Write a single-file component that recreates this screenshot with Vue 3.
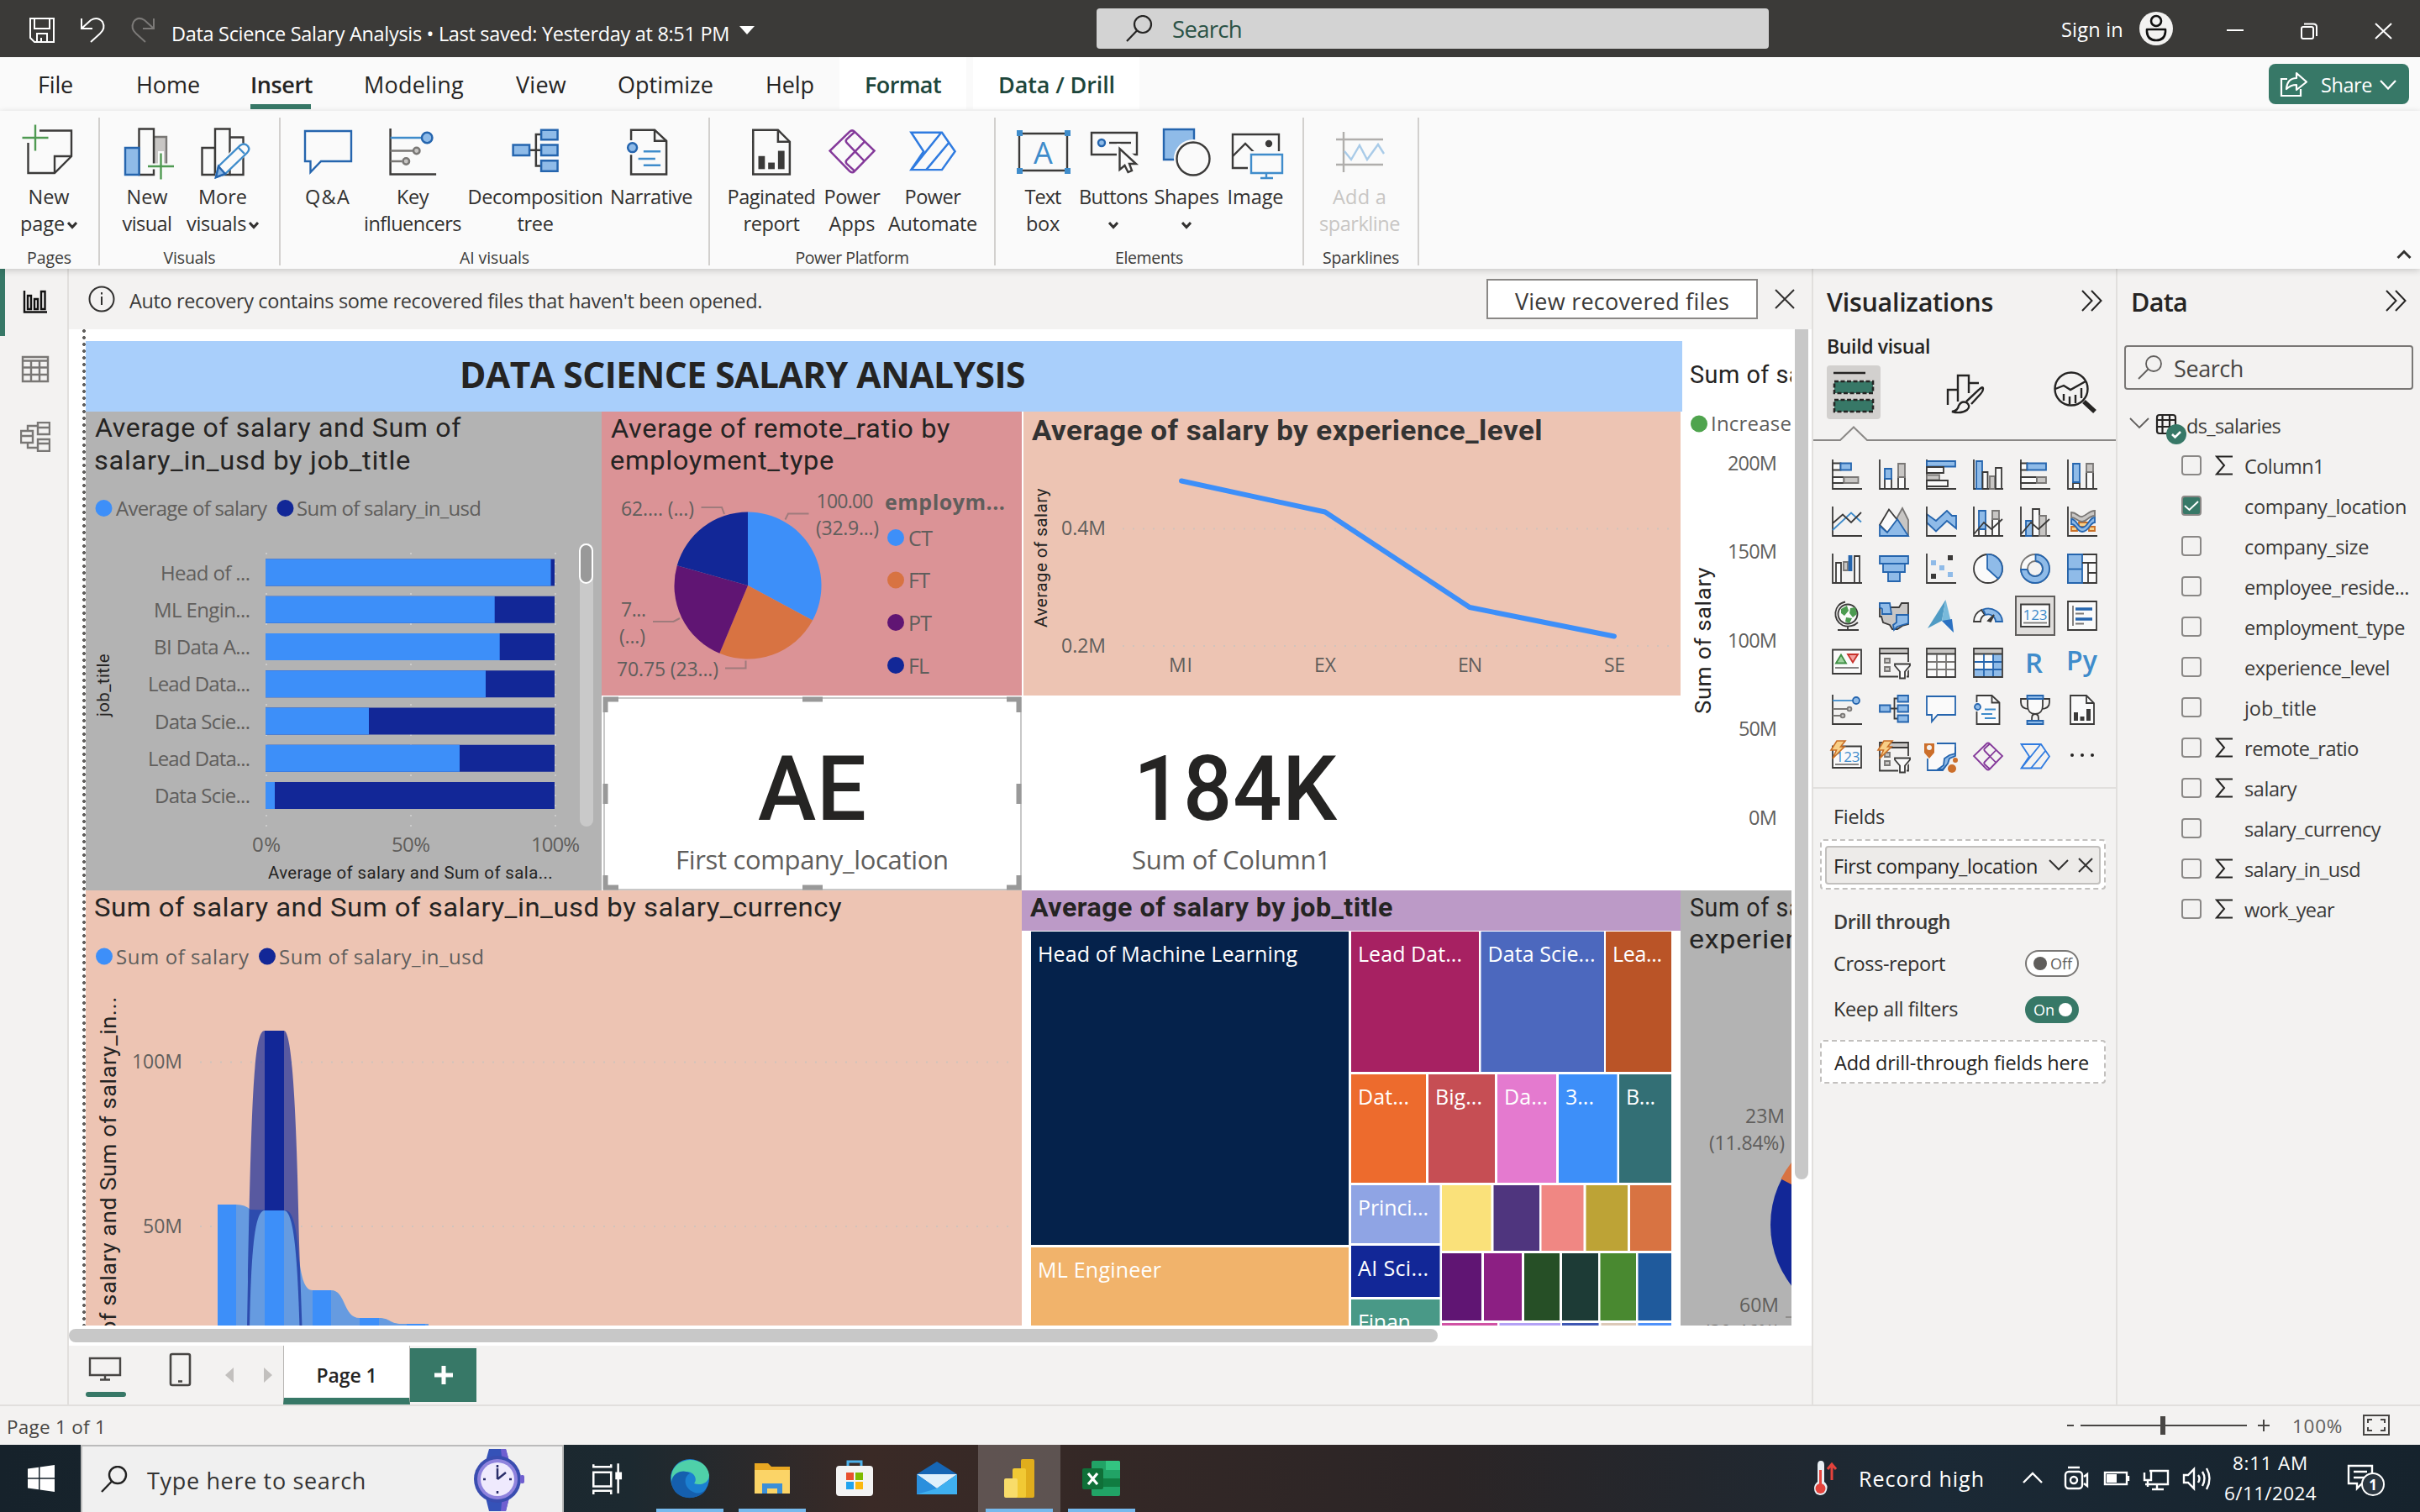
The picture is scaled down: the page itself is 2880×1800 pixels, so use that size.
<script setup>
// Stretches or tightens letter spacing so a label takes exactly the given width
const vFit = {
  mounted(el, { value }) {
    if (!value) return
    const range = document.createRange()
    range.selectNodeContents(el)
    const w = range.getBoundingClientRect().width
    el.style.letterSpacing = ((value + 2 - w) / el.textContent.length).toFixed(3) + 'px'
  }
}
const vDin = {
  mounted(el, { value }) {
    el.setAttribute('textLength', value)
    el.setAttribute('lengthAdjust', 'spacingAndGlyphs')
  }
}

const D = '#3b3a39', B = '#2565ae', L = '#8fbbe8', G = '#797775', S = '#c8c6c4', W = '#fafafa', C = '#3f8ccb'
const p = (d, s = D, f = 'none') => `<path d="${d}" stroke="${s}" fill="${f}"/>`
const b = (x1, y1, x2, y2, s = D, f = W) => p(`M${x1} ${y1}H${x2}V${y2}H${x1}Z`, s, f)
const sq = (x, y, w, h, f) => `<rect x="${x}" y="${y}" width="${w}" height="${h}" fill="${f}" stroke="none"/>`
const c = (x, y, r, s = B, f = L) => `<circle cx="${x}" cy="${y}" r="${r}" stroke="${s}" fill="${f}"/>`
const t = (x, y, size, s, f, w = 400) => `<text x="${x}" y="${y}" font-size="${size}" fill="${f}" stroke="none" font-weight="${w}" text-anchor="middle" font-family="Open Sans, sans-serif">${s}</text>`
const axis = p('M1 0V35H36')

const keyInf = axis + p('M1 7H25', C) + c(29, 7, 4) + p('M1 17H18M1 25H10', G) + c(21, 17, 2.4, G, S) + c(13, 25, 2.4, G, S)
const decomp = p('M13.5 16.5H22.5M22.5 4.5H18.5V28.5H22.5') + b(1, 12.5, 13.5, 20.5, B, L) + b(22.5, 1, 35, 8.5, B, L) + b(22.5, 12.5, 35, 20.5, B, L) + b(22.5, 24.5, 35, 32.5, B, L)
const qna = p('M1 2H35V24H14L7 32V24H1Z', B, W)
const narrative = p('M4.5 9V1H22.5L31.5 9.5V35H4.5V20', D, W) + p('M22.5 1V9.5H31.5') + p('M14 17.5H27M10 23H23M14 28H27', C) + c(5.5, 14.5, 3.5)
const paginated = p('M4 1H23L32 10V35H4Z', D, W) + p('M23 1V10H32') + sq(8, 21, 5, 10, D) + sq(15.5, 26, 5, 5, D) + sq(23, 17, 5, 14, D)
const apps = p('M20 2.5Q18 .5 16 2.5L14.5 4M20 2.5L35 17L20 32.5Q18 34.5 16 32.5L1 17L16 2.5M20 2.5L14 8Q12.500 9.500 14 11L27.500 25M20 32.500L14 27Q12.500 25.500 14 24L27.500 10', '#84399a')
const automate = p('M1.5 3H25L35 17.500L25 31.500H1.500L11 17.500Z', '#2f7be0') + p('M24.500 3L2 31M30.500 10.500L13 31.500', '#2f7be0')
const bolt = `<path d="M6 -1H16L10.500 6H15L1 20L5.500 10H-1Z" stroke="#c96f26" fill="#f8cf87" stroke-width="1.600"/>`
const slicer = () => b(1, 1, 35, 34.5, D, '#f3f2f1') + sq(2, 2, 32, 4.500, S) + p('M1 7H35') + b(7, 13, 13, 18, G, S) + b(7, 23, 13, 28, G, S) + `<path d="M17 17H39V23L33 29V38H23V29L17 23Z" fill="#f3f2f1" stroke="none"/>` + p('M19 19.500H37V21.500L31 28.500V36.500H25V28.500L19 21.500Z', D, W)
const tableIcon = (m) => b(1, 1, 35, 35, D, W) + sq(2, 2, 32, 5, S) + (m ? sq(24, 8, 10, 26, L) + sq(2, 26, 32, 8, L) : '') + p('M1 7.500H35', D) + p('M2 17H34M2 26H34M13 8V34M24 8V34', m ? B : G)

const vizIcons = [
  axis + b(1, 4.5, 10.5, 12.5) + b(10.5, 4.5, 23, 12.5, B, L) + b(1, 21, 14.5, 28) + b(14.5, 21, 31.5, 28, G, S),
  axis + b(7, 23, 15, 35) + b(7, 11, 15, 23, B, L) + b(23, 21, 31, 35) + b(23, 5, 31, 21, G, S),
  axis + b(1, 2, 35, 8.5, B, L) + b(1, 9, 21, 16) + b(1, 18.500, 16, 24.500, G, S) + b(1, 25, 26, 32),
  axis + b(4, 2, 11, 35, B, L) + b(11.5, 15, 17.5, 35) + b(20, 20, 26, 35, G, S) + b(27, 10, 34, 35),
  axis + b(1, 4.5, 8.5, 12.5) + b(8.5, 4.5, 31, 12.5, B, L) + b(1, 21, 20, 28) + b(20, 21, 31, 28, G, S),
  axis + b(7, 28, 15, 35) + b(7, 5, 15, 27, B, L) + b(23, 15, 31, 35) + b(23, 5, 31, 15, G, S),
  axis + p('M1 28L23 7.5L35 18.5', C) + p('M1 20L13 9.5L23 19L35 7'),
  p('M19 18L28 2L35 16V35', G, S) + p('M1 22L12 3.500L22 16L10 31Z', D, W) + p('M1 23L10 31L22 15L35 35H1Z', B, L),
  p('M1 9L12 17L25 5L31 11H36V26L25 17L12 29.500L1 19Z', B, L) + axis,
  axis + b(7, 27, 15, 35) + b(7, 5, 15, 27, B, L) + b(23, 15, 31, 35) + b(23, 5, 31, 15, G, S) + p('M1 33L13 19L22 27L35 15'),
  axis + b(7, 17, 15, 35, B, L) + b(15, 3, 23, 35) + b(23, 11, 31, 35, G, S) + p('M1 33L13 19L22 27L35 15'),
  axis + p('M5 24H12V29H5ZM26 24H33V29H26ZM14 19H24V24H14Z', '#c96f26', '#f8cf87') + p('M5 7C12 7 13 13 18 12C24 10 26 5 33 5V11C26 11 23 18 18 18C12 18 11 13 5 13Z', G, S) + p('M5 15C12 15 12 25 18 25C25 25 26 13 33 13V19C27 19 26 30 18 30C11 30 12 21 5 21Z', B, L),
  axis + b(5, 11, 11, 35) + b(14, 10, 19, 20, G, S) + b(20.500, 3, 23.500, 20, B, B) + b(27, 3, 33, 35),
  b(1, 3, 35, 12, B, L) + b(5, 12, 31, 22, B, L) + b(11, 22, 25, 33, B, L),
  axis + sq(26, 2, 6, 6, D) + sq(6, 24, 6, 6, D) + sq(6, 8, 6, 6, L) + sq(16, 14, 6, 6, L) + sq(26, 22, 6, 6, L),
  c(18, 18, 17, D, W) + p('M17 1A17 17 0 0 1 30 30L17 18Z', B, L),
  c(18, 18, 17, G, W) + p('M18.500 1A17 17 0 1 1 1 19H9A9 9 0 1 0 18.500 9Z', B, L) + c(18, 18, 9, G, '#f3f2f1') + p('M18.500 9A9 9 0 1 1 9 19', B),
  b(1, 1, 35, 35) + b(1, 1, 18, 35, B, L) + p('M1 18.500H18', B) + p('M18 11H35M25 11V35M25 23H35'),
  c(19, 16, 11.5, D, W) + `<path d="M11 10L18 6L20 12L15 18L11 15ZM22 9L28 8L30 16L25 20L21 15ZM17 20L24 21L21 27L16 25Z" fill="#4c9b50" stroke="none"/>` + p('M16 1.500C2 4 0 23 13 29.500C20 32 27 30 31 26M7 35H32M19 31V35'),
  p('M1 3H10L14 8H24L27 3H35V28L28 30L22 34H16L13 29L5 26L3 19H1Z', D, S) + p('M1 3H13L15 16H4V10L1 8Z', B, L) + p('M21 17H35V27L28 29L22 31L18 35L17 29L21 26Z', B, L),
  `<path d="M23.500 -1L2 33L19 24Z" fill="#4f9bc4" stroke="none"/><path d="M23.500 -1L33 38L19 24Z" fill="#78badb" stroke="none"/><path d="M19 24L33 38L31 22Z" fill="#2b71c2" stroke="none"/>`,
  p('M1 25A17 16 0 0 1 10 11L14 17A9 9 0 0 0 9 25Z', D, W) + p('M12 10.500A17 16 0 0 1 35 25H27A9 9 0 0 0 15 17Z', B, L) + p('M18 24L25 17L21 25Z', D, D),
  b(1, 4.5, 35, 31) + t(18, 22.5, 17, '123', C) + p('M4 26.500H32', G),
  b(1, 1, 35, 35) + p('M7 6V30', G) + `<path d="M10 10H30M10 22H30" stroke="${B}" stroke-width="3.600"/>` + p('M10 15.500H20M10 27.500H20', G),
  b(1, 2.500, 35, 31) + p('M5 18.500L11 8.500L17 18.500Z', '#3f8f44', '#9fd29f') + p('M19 8H31L25 17.500Z', '#c8322c', '#f2a3a0') + p('M4 24H32', G),
  slicer(),
  tableIcon(false),
  tableIcon(true),
  t(16.5, 30, 33, 'R', C, 600),
  t(17.5, 26.5, 32, 'Py', C, 600),
  keyInf, decomp, qna, narrative,
  p('M9 5H1V9C1 15 5 17 11 17M27 5H35V9C35 15 31 17 25 17M14 31C14 26 14 23 18 23C22 23 22 26 22 31', D, 'none') + p('M9 2H27V13C27 19 24 23 18 23C12 23 9 19 9 13Z', D, W) + b(8.5, 1, 27.5, 5, B, L) + b(8.5, 31, 27.5, 35, B, L),
  paginated,
  b(1, 5.500, 35, 31) + t(19, 23.500, 17, '123', C) + p('M4 27H32', G) + bolt,
  slicer() + bolt,
  p('M13 2H35V14L27 18L24 28L20 34H2V20', B, W) + `<path d="M35 6V14L28 16L22 20L21 28L14 33H20L26 26L28 20L35 17Z" fill="${L}" stroke="${B}"/>` + `<path d="M-2 2H10V13L4 20L-2 13Z" fill="#cc6f2b" stroke="none"/><circle cx="4" cy="7" r="3" fill="#f3f2f1" stroke="none"/><circle cx="31" cy="32" r="5" fill="#cc6f2b" stroke="none"/><circle cx="35" cy="22" r="3" fill="#cc6f2b" stroke="none"/>`,
  apps, automate,
  `<g fill="#252423" stroke="none"><circle cx="6" cy="16" r="2"/><circle cx="18" cy="16" r="2"/><circle cx="30" cy="16" r="2"/></g>`
]

const small = '-2.6 -3.9 41.1 41.1'
const plusGreen = (x, y) => `<path d="M${x} ${y - 15.500}V${y + 15.500}M${x - 15.500} ${y}H${x + 15.500}" stroke="#4f9a52" stroke-width="2.400"/>`
const groups = [
  { name: 'Pages', nw: 51, cls: 'g1', items: [
    { w: 116, l: [['New', 47], ['page', 51]], car: 1, i: p('M21 8.5H59V39L39 59H7.5V23', D, W) + p('M39 59V39H59') + plusGreen(16, 17) }] },
  { name: 'Visuals', nw: 60, cls: 'g2', items: [
    { w: 90, l: [['New', 47], ['visual', 57]], i: b(40, 16, 55, 50, G, S) + b(22.5, 6.5, 40, 61) + b(6, 29, 22.5, 61, B, L) + `<path d="M48.500 33V66M32 51H65" stroke="#fafafa" stroke-width="7"/>` + plusGreen(48.5, 51) },
    { w: 90, l: [['More', 56], ['visuals', 69]], car: 1, i: b(7.5, 29, 23, 61) + b(23, 6.5, 40.500, 61) + p('M40.500 16.500H56.500V61H40.500') + `<path d="M22 66L26 50L52 22L64 27L62 36L36 60Z" fill="#fafafa" stroke="none"/>` + p('M24 64L27 51L53 26Q58 22.500 62 27Q65 31 61 35L35 60Z', C, W) + p('M24 64L27 51L35 60Z', B, L) + p('M51 29L58 36', C) }] },
  { name: 'AI visuals', nw: 81, cls: 'g3', items: [
    { w: 80, l: [['Q&A', 52]], i: p('M5 9H60V45H24L11.5 58V45H5Z', B, W) },
    { w: 122, l: [['Key', 36], ['influencers', 114]], s: 1, i: keyInf },
    { w: 170, l: [['Decomposition', 159], ['tree', 41]], s: 1, i: decomp },
    { w: 106, l: [['Narrative', 96]], s: 1, dx: -3, i: narrative }] },
  { name: 'Power Platform', nw: 133, cls: 'g4', items: [
    { w: 112, l: [['Paginated', 103], ['report', 65]], s: 1, i: paginated },
    { w: 80, l: [['Power', 65], ['Apps', 53]], s: 1, i: apps },
    { w: 112, l: [['Power', 65], ['Automate', 104]], s: 1, i: automate }] },
  { name: 'Elements', nw: 79, cls: 'g5', items: [
    { w: 82, l: [['Text', 41], ['box', 38]], i: b(4, 12, 61, 56) + t(32.5, 48, 36, 'A', C) + sq(1, 8, 7, 7, C) + sq(58, 8, 7, 7, C) + sq(1, 53, 7, 7, C) + sq(58, 53, 7, 7, C) },
    { w: 86, l: [['Buttons', 80]], caret: 1, i: b(6, 11, 60, 37) + c(18, 23, 4) + p('M27 23H53') + `<path d="M36 24V62L60 54L62 42L40 24Z" fill="#fafafa" stroke="none"/>` + p('M39.500 30V55L45.500 50L49.500 58L54 56L51 48H59Z', D, W) },
    { w: 88, l: [['Shapes', 75]], caret: 1, i: b(5, 7, 41, 43, B, L) + `<circle cx="40" cy="42" r="23" fill="#fafafa" stroke="none"/>` + c(40, 42, 19.5, D, W) },
    { w: 76, l: [['Image', 65]], i: b(5, 13, 60, 53) + p('M5 39L20 24L31 35') + c(48, 24, 3, D, D) + `<rect x="23" y="33" width="45" height="36" fill="#fafafa" stroke="none"/>` + b(27, 37, 64, 59, C) + p('M45 59V64M38 65H53', C) }] },
  { name: 'Sparklines', nw: 89, cls: 'g6', items: [
    { w: 132, dis: 1, l: [['Add a', 62], ['sparkline', 94]], i: p('M4 19H60M4 49H60M13 10V58', '#b0aeac') + p('M14 33L22 43L32 26L41 43L54 25L61 36', '#a9cbe8') }] }
]

const tabs = [['File', 40], ['Home', 74], ['Insert', 72], ['Modeling', 117], ['View', 58], ['Optimize', 112], ['Help', 56]]

// horizontal 100% bars: label, label width, split x
const bars = [['Head of ...', 107, 655.5], ['ML Engin...', 115, 588.7], ['BI Data A...', 115, 594.7], ['Lead Data...', 122, 578], ['Data Scie...', 114, 439], ['Lead Data...', 122, 547], ['Data Scie...', 114, 327]]

const wedge = (cx, cy, r, a0, a1) => {
  const pt = (a) => `${(cx + r * Math.sin(a * Math.PI / 180)).toFixed(2)} ${(cy - r * Math.cos(a * Math.PI / 180)).toFixed(2)}`
  return `M${cx} ${cy}L${pt(a0)}A${r} ${r} 0 ${a1 - a0 > 180 ? 1 : 0} 1 ${pt(a1)}Z`
}
const pie = [[0, 118.3, '#3d8ff9'], [118.3, 202.6, '#d87342'], [202.6, 285.7, '#601573'], [285.7, 360, '#122797']]
const pieLabels = [['62.... (...)', 739, 614, 87], ['100.00', 971.5, 605, 68], ['(32.9...)', 971, 636.5, 75], ['7...', 739, 734, 30], ['(...)', 737, 766, 31], ['70.75 (23...)', 734, 805, 121]]
const pieLegend = [['CT', 29, '#3d8ff9', 640], ['FT', 26, '#d87342', 690.5], ['PT', 28, '#601573', 741], ['FL', 25, '#122797', 792]]
const wfTicks = [['200M', 59, 560], ['150M', 59, 665], ['100M', 59, 771], ['50M', 46, 876], ['0M', 34, 982]]

// treemap tiles: x1, y1, x2, y2, colour, label, label width
const tiles = [
  [1227, 1109, 1605, 1482, '#05224b', 'Head of Machine Learning', 309],
  [1227, 1485, 1605, 1580, '#f1b36b', 'ML Engineer', 147],
  [1608, 1109, 1760, 1276, '#a72162', 'Lead Dat...', 124],
  [1762.5, 1109, 1909, 1276, '#4c68be', 'Data Scie...', 128],
  [1911, 1109, 1989, 1276, '#ba5427', 'Lea...', 59],
  [1608, 1279, 1697, 1408, '#ed6b2d', 'Dat...', 61],
  [1700, 1279, 1779, 1408, '#c64e54', 'Big...', 56],
  [1782, 1279, 1852, 1408, '#e47acf', 'Da...', 52],
  [1855, 1279, 1924.5, 1408, '#3d8ff9', '3...', 34],
  [1927, 1279, 1989, 1408, '#336f75', 'B...', 35],
  [1608, 1411, 1713.5, 1480, '#8fa4e4', 'Princi...', 84],
  [1608, 1483, 1713.5, 1544, '#122797', 'AI Sci...', 84],
  [1608, 1547, 1713.5, 1580, '#499987', 'Finan...', 82],
  [1716, 1411, 1774.5, 1489, '#fae17a'], [1777.5, 1411, 1832, 1489, '#4f357e'], [1834.5, 1411, 1884.5, 1489, '#f08783'], [1887.5, 1411, 1937, 1489, '#bda336'], [1940, 1411, 1989, 1489, '#d87342'],
  [1716, 1492, 1763, 1572, '#601573'], [1766, 1492, 1811, 1572, '#8c1f83'], [1814, 1492, 1856, 1572, '#264f26'], [1859, 1492, 1902, 1572, '#1d3b36'], [1904.5, 1492, 1947, 1572, '#498930'], [1949.500, 1492, 1989, 1572, '#1f5a9c'],
  [1716, 1575, 1782, 1580, '#d052a4'], [1784.500, 1575, 1857, 1580, '#b3a1f5'], [1859, 1575, 1902.500, 1580, '#3f57b3'], [1905.500, 1575, 1947, 1580, '#dcc9b8'], [1949.500, 1575, 1989, 1580, '#4f92fa']
]

const fields = [['Column1', 93, 1], ['company_location', 191, 0, 1], ['company_size', 146], ['employee_reside...', 194], ['employment_type', 189], ['experience_level', 171], ['job_title', 84], ['remote_ratio', 134, 1], ['salary', 60, 1], ['salary_currency', 160], ['salary_in_usd', 136, 1], ['work_year', 105, 1]]
</script>

<template>
  <div class="app">
    <header class="titlebar">
      <svg class="qa" viewBox="0 0 200 68" fill="none" stroke="#fff" stroke-width="2">
        <path d="M36 22H64V50H41L36 45ZM41 22V34H59V22M44 50V40H56V50M49 45V50" />
        <path d="M97 22V34H110M97 34L108 24Q116 19 122 26Q126 34 119 40L108 50" />
        <path d="M183 22V34H170M183 34L172 24Q164 19 159 26Q155 34 162 40L173 50" stroke="#7c7a78" />
      </svg>
      <div class="doc"><span v-fit="662">Data Science Salary Analysis • Last saved: Yesterday at 8:51 PM</span></div>
      <svg class="tri" viewBox="0 0 18 10"><path d="M0 0H18L9 10Z" fill="#fff" /></svg>
      <div class="topsearch">
        <svg viewBox="0 0 32 32" fill="none" stroke="#252423" stroke-width="2.200"><circle cx="20" cy="11" r="10" /><path d="M13 18.500L1 31" /></svg>
        <span v-fit="81">Search</span>
      </div>
      <div class="signin"><span v-fit="72">Sign in</span></div>
      <svg class="avatar" viewBox="0 0 40 40"><circle cx="20" cy="20" r="20" fill="#f3f2f1" /><g fill="none" stroke="#111" stroke-width="2.600"><circle cx="20" cy="11" r="6" /><path d="M9 21H31V24Q30 34 20 34Q10 34 9 24Z" stroke-linejoin="round" /></g></svg>
      <svg class="winctl" viewBox="0 0 200 20" fill="none" stroke="#fff" stroke-width="2"><path d="M0 9H20M177 1L196 19M196 1L177 19" /><rect x="89" y="5" width="14" height="14" rx="2" /><path d="M92 1.500H103Q107 1.500 107 5V16" /></svg>
    </header>

    <nav class="tabs">
      <div v-for="(tb, i) in tabs" :key="tb[0]" class="tab" :class="['t' + i, { on: i === 2 }]"><span v-fit="tb[1]">{{ tb[0] }}</span></div>
      <div class="tab ctx c1"><span v-fit="89">Format</span></div>
      <div class="tab ctx c2"><span v-fit="137">Data / Drill</span></div>
      <div class="share">
        <svg viewBox="0 0 34 34" fill="none" stroke="#fff" stroke-width="2.200"><path d="M9 10H2V30H25V22" /><path d="M8 22Q9 9 20 9V3L32 13.500L20 23V17Q13 17 8 22Z" stroke-linejoin="round" /></svg>
        <span v-fit="59">Share</span>
        <svg class="chev" viewBox="0 0 20 12" fill="none" stroke="#fff" stroke-width="2.200"><path d="M1 1L10 10.500L19 1" /></svg>
      </div>
    </nav>

    <section class="ribbon">
      <div v-for="g in groups" :key="g.name" class="group" :class="g.cls">
        <div class="btns">
          <div v-for="(it, k) in g.items" :key="k" class="rb" :class="{ dis: it.dis }" :style="{ width: it.w + 'px' }">
            <svg class="ri" :class="{ nudge: it.dx }" :viewBox="it.s ? small : '0 0 64 64'" :stroke-width="it.s ? 1.6 : 2.4" v-html="it.i" />
            <div v-for="(ln, j) in it.l" :key="j" class="ln">
              <span v-fit="ln[1]">{{ ln[0] }}</span>
              <svg v-if="it.car && j === 1" class="car" viewBox="0 0 12 12" fill="none" stroke="#323130" stroke-width="3"><path d="M1 3L6 8.500L11 3" /></svg>
            </div>
            <div v-if="it.caret" class="ln"><svg class="car solo" viewBox="0 0 12 12" fill="none" stroke="#323130" stroke-width="3"><path d="M1 3L6 8.500L11 3" /></svg></div>
          </div>
        </div>
        <div class="gname"><span v-fit="g.nw">{{ g.name }}</span></div>
      </div>
      <svg class="collapse" viewBox="0 0 18 12" fill="none" stroke="#323130" stroke-width="3"><path d="M1.500 10L9 2.500L16.500 10" /></svg>
    </section>

    <div class="work">
      <aside class="rail">
        <div class="rcell on"><svg viewBox="0 0 36 36" fill="none" stroke="#111" stroke-width="2.400"><path d="M5 4V29.500H32M9 26V10H13V26ZM17 26V14H21V26ZM25 26V5H29.500V26Z" /></svg></div>
        <div class="rcell"><svg viewBox="0 0 36 36" fill="none" stroke="#797775" stroke-width="2.400"><path d="M3 3H33V32H3ZM3 7.500H33M3 15.500H33M3 24H33M13 8V32M23 8V32" /></svg></div>
        <div class="rcell"><svg viewBox="0 0 36 36" fill="none" stroke="#797775" stroke-width="2.400"><path d="M1 11H15V25H1ZM1 17H15M21 1H35V15H21ZM21 7H35M21 21H35V35H21ZM21 26H35M9 11V5H21M9 25V31H21" /></svg></div>
      </aside>

      <main class="main">
        <div class="msg">
          <svg class="info" viewBox="0 0 32 32" fill="none" stroke="#323130" stroke-width="2"><circle cx="16" cy="16" r="14.500" /><path d="M16 13V23M16 8V10.500" /></svg>
          <span class="mtext" v-fit="751">Auto recovery contains some recovered files that haven't been opened.</span>
          <div class="vbtn"><span v-fit="253">View recovered files</span></div>
          <svg class="mx" viewBox="0 0 24 24" fill="none" stroke="#323130" stroke-width="2"><path d="M1 1L23 23M23 1L1 23" /></svg>
        </div>

        <div class="canvas">
          <div class="dots"></div>
          <div class="report">
            <div class="banner"><span v-fit="671">DATA SCIENCE SALARY ANALYSIS</span></div>

            <svg class="v-wf" viewBox="2000 406 132 654">
              <g class="din"><text v-din="134" x="2011" y="456" font-size="30">Sum of sa</text></g>
              <circle cx="2022" cy="504.500" r="10" fill="#4fa44e" />
              <g class="seg"><text x="2036" y="513" font-size="24" textLength="96">Increase</text>
                <text v-for="k in wfTicks" :key="k[0]" :x="2115 - k[1]" :y="k[2]" font-size="23.500" :textLength="k[1]">{{ k[0] }}</text></g>
              <g class="din"><text v-din="175" transform="translate(2036 850) rotate(-90)" font-size="26">Sum of salary</text></g>
            </svg>

            <svg class="v-bars" viewBox="102 490 614 570">
              <rect x="102" y="490" width="614" height="570" fill="#b3b3b3" />
              <g class="din" font-size="30.500"><text v-din="436" x="113" y="520">Average of salary and Sum of</text><text v-din="377" x="112" y="558.500">salary_in_usd by job_title</text></g>
              <circle cx="123.500" cy="605" r="10" fill="#3d8ff9" /><circle cx="339.500" cy="605" r="10" fill="#122797" />
              <g class="seg" font-size="24"><text x="138" y="614" textLength="180">Average of salary</text><text x="353" y="614" textLength="220">Sum of salary_in_usd</text></g>
              <path d="M317 658V984M489 658V984M661 658V984" stroke="#cbcbcb" stroke-width="2" stroke-dasharray="2 10" />
              <g v-for="(r, i) in bars" :key="i">
                <rect x="316" :y="665.5 + i * 44.25" width="344" height="32" fill="#122797" />
                <rect x="316" :y="665.5 + i * 44.25" :width="r[2] - 316" height="32" fill="#3d8ff9" />
                <text class="segt" :x="298 - r[1]" :y="690.5 + i * 44.25" font-size="24" :textLength="r[1]">{{ r[0] }}</text>
              </g>
              <g class="seg" font-size="24"><text x="300" y="1013.500" textLength="34">0%</text><text x="466" y="1013.500" textLength="46">50%</text><text x="632" y="1013.500" textLength="58">100%</text></g>
              <g class="din" font-size="20"><text v-din="339" x="319" y="1045.500">Average of salary and Sum of sala...</text><text v-din="75" transform="translate(130 853) rotate(-90)">job_title</text></g>
              <rect x="690" y="647" width="16" height="337" rx="8" fill="#c9c9c9" />
              <rect x="690" y="648" width="15" height="46" rx="7.500" fill="#999" stroke="#fff" stroke-width="2" />
            </svg>

            <svg class="v-pie" viewBox="716 490 500 338">
              <rect x="716" y="490" width="500" height="338" fill="#db9396" />
              <g class="din" font-size="30.500"><text v-din="404" x="727" y="520.500">Average of remote_ratio by</text><text v-din="267" x="726" y="559">employment_type</text></g>
              <path v-for="w in pie" :key="w[0]" :d="wedge(890, 697, 87.5, w[0], w[1])" :fill="w[2]" />
              <path d="M834.500 604H859L862 612M934.500 618.500L938 611.500H962.500M777 740H801.500L809 736M863 795.500H887.500V786.500" fill="none" stroke="#9f7b7c" stroke-width="2" />
              <g class="seg"><text v-for="l in pieLabels" :key="l[0]" :x="l[1]" :y="l[2]" font-size="23" :textLength="l[3]">{{ l[0] }}</text>
                <text x="1053" y="606.500" font-size="25" font-weight="700" textLength="143">employm...</text>
                <g v-for="l in pieLegend" :key="l[0]"><circle cx="1066" :cy="l[3]" r="10" :fill="l[2]" /><text x="1081" :y="l[3] + 9.500" font-size="25" :textLength="l[1]">{{ l[0] }}</text></g></g>
            </svg>

            <svg class="v-line" viewBox="1216 490 784 338">
              <rect x="1218" y="490" width="782" height="338" fill="#edc4b3" />
              <g class="din dk"><text v-din="608" x="1228" y="524" font-size="34" font-weight="700">Average of salary by experience_level</text></g>
              <path d="M1336 629.500H1988M1336 769H1988" stroke="#d0c3bc" stroke-width="2" stroke-dasharray="2 10" />
              <path d="M1406 572.500L1577 609.500L1749 723L1921 757.500" fill="none" stroke="#3d8ff9" stroke-width="6" stroke-linecap="round" stroke-linejoin="round" />
              <g class="seg" font-size="23"><text x="1263" y="637" textLength="53">0.4M</text><text x="1263" y="777" textLength="53">0.2M</text><text x="1391" y="799.500" textLength="28">MI</text><text x="1564" y="799.500" textLength="26">EX</text><text x="1735" y="799.500" textLength="29">EN</text><text x="1909" y="799.500" textLength="25">SE</text></g>
              <g class="din" font-size="20"><text v-din="166" transform="translate(1246 747) rotate(-90)">Average of salary</text></g>
            </svg>

            <svg class="v-card1" viewBox="716 828 500 232">
              <rect x="716" y="828" width="500" height="232" fill="#fff" />
              <rect x="719" y="831" width="496" height="228" fill="none" stroke="#c8c8c8" stroke-width="2" />
              <path d="M736 832.500H720.500V848M1198 832.500H1212.500V848M736 1056.500H720.500V1042M1198 1056.500H1212.500V1042M955 832.500H979M955 1056.500H979M720.500 933V957M1212.500 933V957" fill="none" stroke="#999" stroke-width="6" />
              <g class="din num"><text v-din="130" x="902" y="976" font-size="107">AE</text></g>
              <g class="seg"><text x="804" y="1035" font-size="31" textLength="325">First company_location</text></g>
            </svg>

            <svg class="v-card2" viewBox="1216 828 784 232">
              <g class="din num"><text v-din="243" x="1349" y="975.500" font-size="107">184K</text></g>
              <g class="seg"><text x="1347" y="1035" font-size="31" textLength="237">Sum of Column1</text></g>
            </svg>

            <svg class="v-ribbon" viewBox="102 1060 1114 518">
              <rect x="102" y="1060" width="1114" height="518" fill="#edc4b3" />
              <g class="din"><text v-din="890" x="112" y="1091" font-size="30.500">Sum of salary and Sum of salary_in_usd by salary_currency</text></g>
              <circle cx="124" cy="1138.500" r="10" fill="#3d8ff9" /><circle cx="318" cy="1138.500" r="10" fill="#122797" />
              <g class="seg" font-size="24"><text x="138" y="1147.500" textLength="158">Sum of salary</text><text x="332" y="1147.500" textLength="244">Sum of salary_in_usd</text></g>
              <path d="M238 1264.500H1202M238 1460H1202" stroke="#d0c3bc" stroke-width="2" stroke-dasharray="2 10" />
              <g class="seg" font-size="23"><text x="157" y="1272" textLength="60">100M</text><text x="170" y="1468" textLength="47">50M</text></g>
              <path d="M281 1434Q292 1434 298 1440L340 1441C352 1441 354 1480 356 1500C359 1520 362 1536 372 1536H394C412 1536 408 1569 428 1569H451C464 1569 464 1576 478 1576H510V1580H281Z" fill="#669be0" />
              <path d="M294 1580C299 1300 302 1227 315 1227H338C348 1227 353 1330 356 1480L359.500 1580Z" fill="#122797" fill-opacity=".68" />
              <path d="M297 1580C299 1480 304 1441 315 1441H338C350 1441 354 1500 356.500 1580Z" fill="#669be0" />
              <path d="M259 1434H281V1580H259ZM315 1441H338V1580H315ZM372 1536H394V1580H372ZM428 1569H451V1580H428ZM484 1576H506V1580H484Z" fill="#3d8ff9" />
              <rect x="315" y="1227" width="23" height="214" fill="#122797" />
              <g class="din" font-size="25"><text v-din="402" transform="translate(138 1588) rotate(-90)">of salary and Sum of salary_in...</text></g>
            </svg>

            <svg class="v-tree" viewBox="1216 1060 784 518">
              <rect x="1216" y="1060" width="784" height="518" fill="#fff" />
              <rect x="1216" y="1060" width="784" height="48" fill="#bc9ac7" />
              <g class="din"><text v-din="432" x="1226" y="1091" font-size="31" font-weight="700">Average of salary by job_title</text></g>
              <g v-for="(k, i) in tiles" :key="i"><rect :x="k[0]" :y="k[1]" :width="k[2] - k[0]" :height="k[3] - k[1]" :fill="k[4]" /><text v-if="k[5]" class="tt" :x="k[0] + 8" :y="k[1] + 35.5" font-size="25" :textLength="k[6]">{{ k[5] }}</text></g>
            </svg>

            <svg class="v-donut" viewBox="2000 1060 132 518">
              <rect x="2000" y="1060" width="132" height="518" fill="#b3b3b3" />
              <g class="din" font-size="30.500"><text v-din="134" x="2011" y="1091">Sum of sa</text><text v-din="134" x="2010" y="1129">experien</text></g>
              <circle cx="2224.500" cy="1458" r="117.500" fill="#122797" />
              <path d="M2224.500 1458L2119.400 1403.600A117.500 117.500 0 0 1 2150 1366Z" fill="#d87342" />
              <path d="M2125 1568H2134" stroke="#8f8d8b" stroke-width="2" />
              <g class="seg" font-size="23"><text x="2077" y="1337" textLength="47">23M</text><text x="2034" y="1369" textLength="90">(11.84%)</text><text x="2070" y="1562" textLength="47">60M</text><text x="2028" y="1594" textLength="90">(30.46%)</text></g>
            </svg>
          </div>
          <div class="vscroll"></div>
        </div>
        <div class="hscroll"><div></div></div>

        <div class="pages">
          <div class="desk"><svg viewBox="0 0 40 30" fill="none" stroke="#484644" stroke-width="2.400"><path d="M2 2H38V22H2ZM20 22V27M14 27.500H26" /></svg><i></i></div>
          <svg class="phone" viewBox="0 0 28 42" fill="none" stroke="#484644" stroke-width="2.600"><rect x="2" y="2" width="23" height="37" rx="2" /><path d="M11 34.500H16" /></svg>
          <svg class="arrows" viewBox="0 0 56 18" fill="#c2c0be"><path d="M10 0V18L0 9ZM46 0V18L56 9Z" /></svg>
          <div class="ptab"><span v-fit="70">Page 1</span></div>
          <div class="plus"><svg viewBox="0 0 24 24" stroke="#fff" stroke-width="5"><path d="M12 1V23M1 12H23" /></svg></div>
        </div>
      </main>

      <aside class="viz">
        <div class="ph"><span v-fit="196">Visualizations</span><svg viewBox="0 0 26 26" fill="none" stroke="#252423" stroke-width="2"><path d="M1 1L12.500 13L1 25M12 1L23.500 13L12 25" /></svg></div>
        <div class="bv"><span v-fit="121">Build visual</span></div>
        <div class="modes">
          <svg class="sel" viewBox="0 0 64 64" fill="none"><path d="M8 9H46" stroke="#252423" stroke-width="2.600" /><g fill="#377867" stroke="#252423" stroke-width="2.600" stroke-dasharray="5 2.500"><rect x="9" y="19" width="46" height="14" /><rect x="9" y="41" width="46" height="14" /></g></svg>
          <svg viewBox="0 0 64 64" fill="none" stroke="#252423" stroke-width="2.400"><path d="M12 47V29H24M24 43V12H37V33M37 21H49" /><path d="M34 43L49 29Q54 24 54 28Q54 31 51 34L40 46" fill="#f3f2f1" /><path d="M17 55Q24 54 25 48Q28 42 34 44Q40 48 35 53Q28 58 17 55Z" fill="#f3f2f1" /></svg>
          <svg viewBox="0 0 64 64" fill="none" stroke="#252423" stroke-width="2.400"><circle cx="27" cy="28" r="19.500" /><path d="M8 28L18 24L26 29L44 19M18 34V42M25 37V46M32 35V45M39 27V39" /><path d="M42 43L55 55" stroke-width="5.500" /></svg>
        </div>
        <svg class="notch" viewBox="0 0 360 48" fill="none" stroke="#8a8886" stroke-width="2"><path d="M0 25H32L48 9.500L64 25H360" /></svg>
        <div class="vgrid">
          <div v-for="(ic, i) in vizIcons" :key="i" class="vc" :class="{ on: i === 22 }"><svg viewBox="0 0 36 36" fill="none" stroke-width="1.800" v-html="ic" /></div>
        </div>
        <div class="wells">
          <div class="lab f"><span v-fit="59">Fields</span></div>
          <div class="drop"><div class="pill"><span v-fit="241">First company_location</span>
            <svg class="pc" viewBox="0 0 24 14" fill="none" stroke="#323130" stroke-width="2"><path d="M1 1L12 12L23 1" /></svg>
            <svg class="px" viewBox="0 0 18 18" fill="none" stroke="#323130" stroke-width="2"><path d="M1 1L17 17M17 1L1 17" /></svg></div></div>
          <div class="lab d"><span v-fit="137">Drill through</span></div>
          <div class="lab s"><span v-fit="131">Cross-report</span><div class="tog"><i></i><span v-fit="24">Off</span></div></div>
          <div class="lab s k"><span v-fit="146">Keep all filters</span><div class="tog on"><span v-fit="23">On</span><i></i></div></div>
          <div class="drop add"><span v-fit="301">Add drill-through fields here</span></div>
        </div>
      </aside>

      <aside class="data">
        <div class="ph"><span v-fit="65">Data</span><svg viewBox="0 0 26 26" fill="none" stroke="#252423" stroke-width="2"><path d="M1 1L12.500 13L1 25M12 1L23.500 13L12 25" /></svg></div>
        <div class="ds"><svg viewBox="0 0 30 30" fill="none" stroke="#605e5c" stroke-width="1.800"><circle cx="19" cy="10" r="9" /><path d="M12.500 16.500L1 28" /></svg><span v-fit="81">Search</span></div>
        <div class="root">
          <svg class="rc" viewBox="0 0 24 14" fill="none" stroke="#605e5c" stroke-width="1.800"><path d="M1 1L12 12L23 1" /></svg>
          <svg class="rt" viewBox="0 0 38 38" fill="none" stroke="#252423" stroke-width="2.200"><rect x="2" y="2" width="22" height="22" rx="3" /><path d="M2 8H24M2 16H24M8.500 2V24M17 2V24" /><circle cx="25" cy="25" r="12" fill="#377867" stroke="none" /><path d="M20 25L23.500 28.500L30 22" stroke="#fff" stroke-width="2.600" /></svg>
          <span v-fit="110">ds_salaries</span>
        </div>
        <div v-for="f in fields" :key="f[0]" class="fr">
          <div class="cb" :class="{ on: f[3] }"><svg v-if="f[3]" viewBox="0 0 20 20" fill="none" stroke="#fff" stroke-width="2"><path d="M2 10L7.500 15L18 5" /></svg></div>
          <svg class="sg" viewBox="0 0 22 24" fill="none" stroke="#252423" stroke-width="2"><path v-if="f[2]" d="M21 1.500H2L11 12L2 22.500H21" /></svg>
          <span v-fit="f[1]">{{ f[0] }}</span>
        </div>
      </aside>
    </div>

    <footer class="status">
      <span class="pg" v-fit="116">Page 1 of 1</span>
      <svg class="zoom" viewBox="0 0 250 30" fill="none" stroke="#484644" stroke-width="2"><path d="M1 15H9M17 15H215M228 15H242M235 8V22" /><rect x="112" y="4" width="6" height="22" fill="#484644" stroke="none" /></svg>
      <span class="pct" v-fit="58">100%</span>
      <svg class="fit" viewBox="0 0 32 26" fill="none" stroke="#484644" stroke-width="2"><rect x="1" y="1" width="30" height="23" /><path d="M6 10V6H11M21 6H26V10M26 15V19H21M11 19H6V15" /></svg>
    </footer>

    <div class="taskbar">
      <div class="start"><svg viewBox="0 0 32 32" fill="#fff"><path d="M0 4.500L13 2.700V15.300H0ZM14.500 2.500L32 0V15.300H14.500ZM0 16.800H13V29.300L0 27.500ZM14.500 16.800H32V32L14.500 29.500Z" /></svg></div>
      <div class="tsearch">
        <svg class="mag" viewBox="0 0 32 32" fill="none" stroke="#222" stroke-width="2.400"><circle cx="20" cy="11" r="10" /><path d="M13 18.500L1 31" /></svg>
        <span v-fit="259">Type here to search</span>
        <svg class="watch" viewBox="0 0 64 76"><path d="M22 2H42L47 20H17ZM17 56H47L42 76H22Z" fill="#3552b8" /><path d="M42 2L47 20H38L36 2ZM42 76L47 56H38L36 76Z" fill="#6f5fd0" /><circle cx="32" cy="38" r="28" fill="#3a4db0" /><circle cx="32" cy="38" r="24" fill="#8f83dd" /><circle cx="32" cy="38" r="20" fill="#efeafd" /><path d="M32 38L42 30M32 38V25M32 21V24M32 52V55M15 38H18M46 38H49" stroke="#2b2f6b" stroke-width="2.500" /><rect x="59" y="33" width="5" height="10" rx="2" fill="#6f5fd0" /></svg>
      </div>
      <div class="tic tv"><svg viewBox="0 0 40 40" fill="none" stroke="#fff" stroke-width="2.400"><path d="M5 13H25V29H5ZM5 4V7H25V4M5 38V34H25V38M33 3V37" /><path d="M31 14H36V20H31Z" fill="#fff" /></svg></div>
      <div class="tic run"><svg viewBox="0 0 48 48"><circle cx="24" cy="24" r="23" fill="#1b7fd1" /><path d="M2 20C6 -4 44 -4 47 20C47 30 36 33 29 30C34 24 28 15 19 16C9 17 3 24 2 32Z" fill="#4fd0a9" /><path d="M2 28C4 15 18 13 24 18C16 22 16 36 30 41C36 43 42 39 44 36C36 52 4 52 2 28Z" fill="#155fae" /></svg></div>
      <div class="tic run"><svg viewBox="0 0 48 48"><path d="M3 6H19L23 10H45V40H3Z" fill="#e8a722" /><path d="M3 14H45V42H3Z" fill="#fbd467" /><path d="M12 42V30H36V42H30V36H18V42Z" fill="#3b8fd8" /></svg></div>
      <div class="tic"><svg viewBox="0 0 48 48"><path d="M16 10V4H32V10" fill="none" stroke="#4cb0ea" stroke-width="3" /><rect x="2" y="9" width="44" height="36" rx="4" fill="#f3f3f3" /><path d="M14 17H23V26H14Z" fill="#e8502e" /><path d="M25 17H34V26H25Z" fill="#7fba00" /><path d="M14 28H23V37H14Z" fill="#22a3ee" /><path d="M25 28H34V37H25Z" fill="#fbb80f" /></svg></div>
      <div class="tic"><svg viewBox="0 0 48 48"><path d="M0 19L24 4L48 19V43H0Z" fill="#1666b5" /><path d="M0 19H48L24 36Z" fill="#dff0fb" /><path d="M0 19L24 36V43H0Z" fill="#2a8fdd" /><path d="M48 19L24 36L0 43H48Z" fill="#3fb0f0" /></svg></div>
      <div class="tic run act"><svg viewBox="0 0 48 48"><rect x="26" y="1" width="16" height="46" rx="2" fill="#e0ad1c" /><rect x="16" y="12" width="16" height="35" rx="2" fill="#f1c934" /><rect x="6" y="24" width="16" height="23" rx="2" fill="#f8dc6a" /></svg></div>
      <div class="tic run"><svg viewBox="0 0 48 48"><rect x="12" y="3" width="34" height="42" rx="2" fill="#21a366" /><path d="M29 3H44Q46 3 46 5V14H29Z" fill="#33c481" /><path d="M12 24H46V34H12Z" fill="#107c41" /><rect x="1" y="12" width="25" height="25" rx="2" fill="#0f7038" /><path d="M8 18L19 31M19 18L8 31" stroke="#fff" stroke-width="3.200" /></svg></div>
      <div class="spacer"></div>
      <svg class="therm" viewBox="0 0 34 44"><path d="M10 6Q10 1 14 1Q18 1 18 6V26Q23 30 21 36Q19 42 13 42Q6 41 6 34Q6 29 10 26Z" fill="#e9eef3" /><circle cx="13.500" cy="34" r="6" fill="#e5433c" /><path d="M12 12H15V32H12Z" fill="#e5433c" /><path d="M27 24V6M22 11L27 5L32 11" stroke="#e5433c" stroke-width="3" fill="none" /></svg>
      <span class="rec" v-fit="148">Record high</span>
      <svg class="tray" viewBox="0 0 230 40" fill="none" stroke="#fff" stroke-width="2.400">
        <path d="M1 25L12 14L23 25" /><rect x="51" y="12" width="20" height="20" rx="4" /><circle cx="61" cy="22" r="4" /><path d="M54 7H68M73 18L77 15V29L73 26" />
        <rect x="98" y="13" width="26" height="14" /><path d="M126 17V23" /><rect x="100" y="15" width="12" height="10" fill="#fff" stroke="none" />
        <path d="M151 11H173V27H146M160 27V32M154 33H168M145 13V22H153V12M149 22V30" /><path d="M192 16V25H197L204 32V9L197 16ZM209 16Q212 20 209 25M214 12Q219 20 214 29M219 8Q226 20 219 33" />
      </svg>
      <div class="clock"><span v-fit="88">8:11 AM</span><span v-fit="108">6/11/2024</span></div>
      <div class="notif"><svg viewBox="0 0 36 36" fill="none" stroke="#fff" stroke-width="2.400"><path d="M3 4H31V25H19L13 31V25H3ZM9 11H25M9 18H25" /></svg><b>1</b></div>
    </div>
  </div>
</template>

<style>
body { margin: 0; overflow: hidden; }
</style>

<style scoped>
.app { width: 2880px; height: 1800px; display: flex; flex-direction: column; font-family: "Open Sans", "Noto Sans", sans-serif; font-size: 23.500px; color: #252423; background: #f3f2f1; overflow: hidden; white-space: nowrap; }
.app * { box-sizing: border-box; }
svg { display: block; flex: none; overflow: hidden; }
.titlebar { height: 68px; background: #3b3a38; color: #fff; display: flex; flex: none; }
.qa { width: 200px; height: 68px; }
.doc { padding-left: 4px; width: 680px; line-height: 81px; }
.tri { width: 18px; height: 10px; margin-top: 31px; }
.topsearch { margin: 10px 0 0 407px; width: 800px; height: 48px; background: #d3d3d3; border-radius: 4px; padding-left: 35px; display: flex; align-items: center; gap: 23px; color: #2a5246; font-size: 27.500px; }
.topsearch svg { width: 32px; height: 32px; }
.signin { margin-left: 348px; width: 93px; line-height: 70px; }
.avatar { width: 40px; height: 40px; margin-top: 14px; }
.winctl { width: 200px; height: 20px; margin: 27px 0 0 64px; }
.tabs { height: 64px; flex: none; background: #fafafa; display: flex; position: relative; font-size: 27px; line-height: 65px; }
.tab { height: 62px; }
.t0 { margin-left: 45px; width: 117px; }
.t1 { width: 136px; }
.t2 { width: 72px; margin-right: 63px; }
.t3 { width: 181px; }
.t4 { width: 121px; }
.t5 { width: 176px; }
.t6 { width: 88px; }
.on.tab { font-weight: 600; border-bottom: 6px solid #377867; }
.ctx { background: #fff; font-weight: 600; color: #1d463b; padding-left: 30px; }
.c1 { width: 151px; margin-right: 8px; }
.c2 { width: 198px; }
.share { margin: 8px 0 0 1344px; width: 167px; height: 48px; line-height: 48px; background: #377867; border-radius: 8px; color: #fff; font-size: 23.500px; display: flex; align-items: center; padding: 1px 0 0 13px; }
.share svg { width: 34px; height: 34px; margin-right: 15px; }
.share .chev { width: 20px; height: 12px; margin: 0 0 0 9px; }
.ribbon { height: 188px; flex: none; background: #fafafa; display: flex; position: relative; z-index: 2; box-shadow: 0 2px 8px rgba(0,0,0,.18); }
.group { height: 176px; margin-top: 8px; border-right: 2px solid #d2d0ce; display: flex; flex-direction: column; }
.g1 { width: 119px; }
.g2 { width: 215px; } .g2 .btns { padding-left: 11px; }
.g3 { width: 511px; } .g3 .btns { padding-left: 16px; }
.g4 { width: 340px; } .g4 .btns { padding-left: 17px; }
.g5 { width: 367px; } .g5 .btns { padding-left: 15px; }
.g6 { width: 137px; }
.btns { display: flex; flex: none; height: 152px; padding-top: 7px; }
.rb { display: flex; flex-direction: column; align-items: center; color: #323130; }
.dis { color: #c8c6c4; }
.ri { width: 64px; height: 64px; fill: none; overflow: visible; margin-bottom: 7px; }
.ri.nudge { margin-right: 7px; }
.ln { height: 32px; line-height: 32px; display: flex; align-items: center; }
.car { width: 12px; height: 12px; margin-left: 3px; margin-top: 4px; }
.solo { margin-left: 0; }
.gname { text-align: center; font-size: 19.500px; line-height: 30px; height: 24px; color: #3b3a39; }
.collapse { position: absolute; width: 18px; height: 12px; right: 10px; top: 165px; }
.work { height: 1352px; flex: none; display: flex; }
.rail { width: 82px; border-right: 2px solid #e1dfdd; }
.rcell { height: 80px; display: flex; align-items: center; padding-left: 24px; }
.rcell.on { border-left: 6px solid #377867; padding-left: 18px; }
.rcell svg { width: 36px; height: 36px; }
.main { width: 2074px; display: flex; flex-direction: column; }
.msg { height: 72px; flex: none; display: flex; align-items: center; color: #3b3a39; padding-left: 23px; }
.info { width: 32px; height: 32px; margin-right: 17px; }
.mtext { width: 1615px; padding-top: 4px; }
.vbtn { width: 323px; height: 48px; line-height: 48px; background: #fff; border: 2px solid #8a8886; font-size: 27px; text-align: center; padding-top: 1px; }
.mx { width: 24px; height: 24px; margin-left: 20px; }
.canvas { height: 1186px; flex: none; background: #fff; display: flex; }
.dots { width: 4px; margin: 0 0 0 16px; background: radial-gradient(circle, #605e5c 1.800px, transparent 2.200px) 0 -2px / 4px 8px; }
.report { margin-top: 14px; width: 2030px; display: grid; grid-template-columns: 614px 500px 784px 132px; grid-template-rows: 84px 338px 232px 518px; height: 1172px; }
.report svg { width: 100%; height: 100%; }
.banner { grid-column: 1 / 4; margin-right: -2px; background: #a9cffb; font-weight: 700; font-size: 42.500px; line-height: 80px; padding-left: 445px; }
.v-wf { grid-column: 4; grid-row: 1 / 4; }
.v-bars { grid-column: 1; grid-row: 2 / 4; }
.v-pie { grid-column: 2; grid-row: 2; }
.v-line { grid-column: 3; grid-row: 2; }
.v-card1 { grid-column: 2; grid-row: 3; }
.v-card2 { grid-column: 3; grid-row: 3; }
.v-ribbon { grid-column: 1 / 3; grid-row: 4; }
.v-tree { grid-column: 3; grid-row: 4; }
.v-donut { grid-column: 4; grid-row: 4; }
.din { font-family: Roboto, sans-serif; fill: #252423; letter-spacing: .02em; }
.dk { fill: #333; }
.num { font-weight: 500; letter-spacing: .04em; }
.seg, .segt { fill: #605e5c; }
.tt { fill: #fff; }
.vscroll { width: 16px; height: 1012px; margin-left: 4px; background: #c8c8c8; border-radius: 0 0 8px 8px; }
.hscroll { height: 24px; flex: none; background: #fff; padding-top: 4px; }
.hscroll div { width: 1629px; height: 16px; border-radius: 8px; background: #c8c8c8; }
.pages { height: 70px; flex: none; display: flex; }
.desk { margin-left: 20px; width: 99px; padding-top: 13px; }
.desk svg { width: 40px; height: 30px; margin-left: 3px; }
.desk i { display: block; width: 48px; height: 6px; border-radius: 3px; background: #377867; margin-top: 12px; }
.phone { width: 28px; height: 42px; margin-top: 8px; }
.arrows { width: 56px; height: 18px; margin: 26px 13px 0 39px; }
.ptab { width: 151px; background: #fff; border: 1px solid #b8b6b4; border-top: 0; border-bottom: 8px solid #377867; text-align: center; font-weight: 600; font-size: 23px; line-height: 71px; height: 70px; }
.plus { width: 79px; height: 64px; margin-top: 3px; background: #377867; display: flex; align-items: center; justify-content: center; }
.plus svg { width: 24px; height: 24px; }
.viz { width: 362px; border-left: 2px solid #e1dfdd; }
.data { width: 362px; border-left: 2px solid #e1dfdd; }
.ph { height: 76px; display: flex; align-items: center; justify-content: space-between; font-weight: 600; font-size: 30.500px; padding: 0 15px 0 16px; }
.ph span { padding-top: 2px; }
.ph svg { width: 26px; height: 26px; }
.bv { height: 39px; line-height: 32px; font-weight: 600; font-size: 23px; padding-left: 16px; }
.modes { display: flex; justify-content: space-between; padding: 0 16px; }
.modes svg { width: 64px; height: 64px; }
.modes .sel { background: #d2d0ce; border-radius: 4px; }
.notch { width: 360px; height: 48px; }
.vgrid { display: grid; grid-template-columns: repeat(6, 36px); grid-auto-rows: 36px; gap: 20px; padding-left: 22px; align-content: start; border-bottom: 2px solid #e1dfdd; height: 392px; }
.vc svg { width: 36px; height: 36px; overflow: visible; }
.vc.on { margin: -6px; padding: 4px; border: 2px solid #605e5c; background: #dfdddb; width: 48px; height: 48px; }
.lab { padding-left: 24px; color: #323130; display: flex; align-items: center; }
.f { height: 60px; padding-top: 6px; }
.drop { margin-left: 8px; width: 340px; height: 60px; border: 2px dashed #c2c0be; border-radius: 4px; background: #fff; padding: 6px 4px; }
.pill { height: 46px; border: 2px solid #c2c0be; border-radius: 4px; background: #edebe9; display: flex; align-items: center; padding-left: 8px; color: #252423; }
.pill span { width: 256px; padding-top: 2px; }
.pc { width: 24px; height: 14px; }
.px { width: 18px; height: 18px; margin-left: 11px; }
.d { height: 72px; font-weight: 600; padding-top: 1px; margin-top: 1px; color: #3b3a39; }
.s { height: 32px; margin-top: -1px; }
.s > span { width: 228px; margin-top: -1px; }
.k { margin-top: 23px; }
.k > span { margin-top: -2px; }
.tog { width: 64px; height: 32px; border: 2px solid #797775; border-radius: 16px; background: #fff; display: flex; align-items: center; font-size: 18px; color: #605e5c; padding-left: 8px; gap: 4px; line-height: 28px; }
.tog i { width: 16px; height: 16px; border-radius: 8px; background: #605e5c; }
.tog.on { background: #377867; border-color: #377867; color: #fff; }
.tog.on i { background: #fff; margin-left: 1px; }
.add { height: 52px; margin-top: 20px; padding: 0 0 0 15px; line-height: 50px; }
.data .ph { padding: 0 15px 0 16px; }
.ds { margin: 15px 0 0 8px; width: 344px; height: 53px; border: 2px solid #797775; border-radius: 4px; display: flex; align-items: center; padding: 1px 0 0 14px; font-size: 27px; color: #484644; }
.ds svg { width: 30px; height: 30px; margin-right: 13px; }
.root { height: 78px; padding: 6px 0 0 14px; display: flex; align-items: center; margin-bottom: -12px; color: #3b3a39; }
.rc { width: 24px; height: 14px; margin-top: -4px; }
.rt { width: 38px; height: 38px; margin: 9px 0 0 7px; }
.root span { padding-top: 2px; margin-left: -1px; }
.fr { height: 48px; display: flex; align-items: center; padding-left: 76px; color: #3b3a39; }
.cb { width: 24px; height: 24px; border: 2px solid #8a8886; border-radius: 4px; }
.cb.on { background: #377867; }
.sg { width: 22px; height: 24px; margin: 0 13px 0 16px; }
.fr span { padding-top: 2px; }
.status { height: 48px; flex: none; border-top: 2px solid #e1dfdd; display: flex; align-items: center; color: #484644; font-size: 22.500px; }
.pg { width: 2450px; padding-left: 8px; padding-top: 2px; }
.zoom { width: 250px; height: 30px; margin-left: 9px; }
.pct { width: 87px; padding-left: 19px; color: #605e5c; margin-right: 16px; }
.fit { width: 32px; height: 26px; }
.taskbar { height: 80px; flex: none; background: linear-gradient(90deg, #16222b 0, #1c2930 26%, #3a2a26 36%, #2b2526 60%, #1b2935 80%, #16232d 100%); display: flex; align-items: center; color: #fff; }
.start { width: 96px; padding-left: 33px; }
.start svg { width: 32px; height: 32px; }
.tsearch { width: 575px; height: 80px; background: #f0f0f0; border: 2px solid #bbb; border-bottom: 0; display: flex; align-items: center; color: #333; font-size: 27px; padding-left: 22px; }
.mag { width: 32px; height: 32px; margin-right: 23px; }
.tsearch span { width: 385px; padding-top: 2px; }
.watch { width: 64px; height: 76px; }
.tic { width: 98px; height: 80px; display: flex; align-items: center; justify-content: center; }
.tv { width: 101px; }
.tic svg { width: 48px; height: 48px; }
.tic.tv svg { width: 42px; height: 42px; }
.run { background: linear-gradient(#76b9ed, #76b9ed) center bottom / 80px 4px no-repeat; }
.act { background-color: rgba(255,255,255,.2); }
.spacer { flex: 1; }
.therm { width: 34px; height: 44px; }
.rec { width: 176px; padding-left: 25px; font-size: 25px; }
.tray { width: 230px; height: 40px; margin-left: 44px; }
.clock { width: 132px; display: flex; flex-direction: column; align-items: center; line-height: 36px; font-size: 22.500px; margin: 0 24px 0 -1px; }
.notif { width: 88px; height: 50px; display: flex; position: relative; }
.notif svg { width: 36px; height: 36px; margin-top: 6px; }
.notif b { position: absolute; left: 18px; top: 18px; width: 28px; height: 28px; line-height: 26px; border-radius: 14px; background: #2b3640; border: 2px solid #fff; font-size: 17px; text-align: center; }
</style>
